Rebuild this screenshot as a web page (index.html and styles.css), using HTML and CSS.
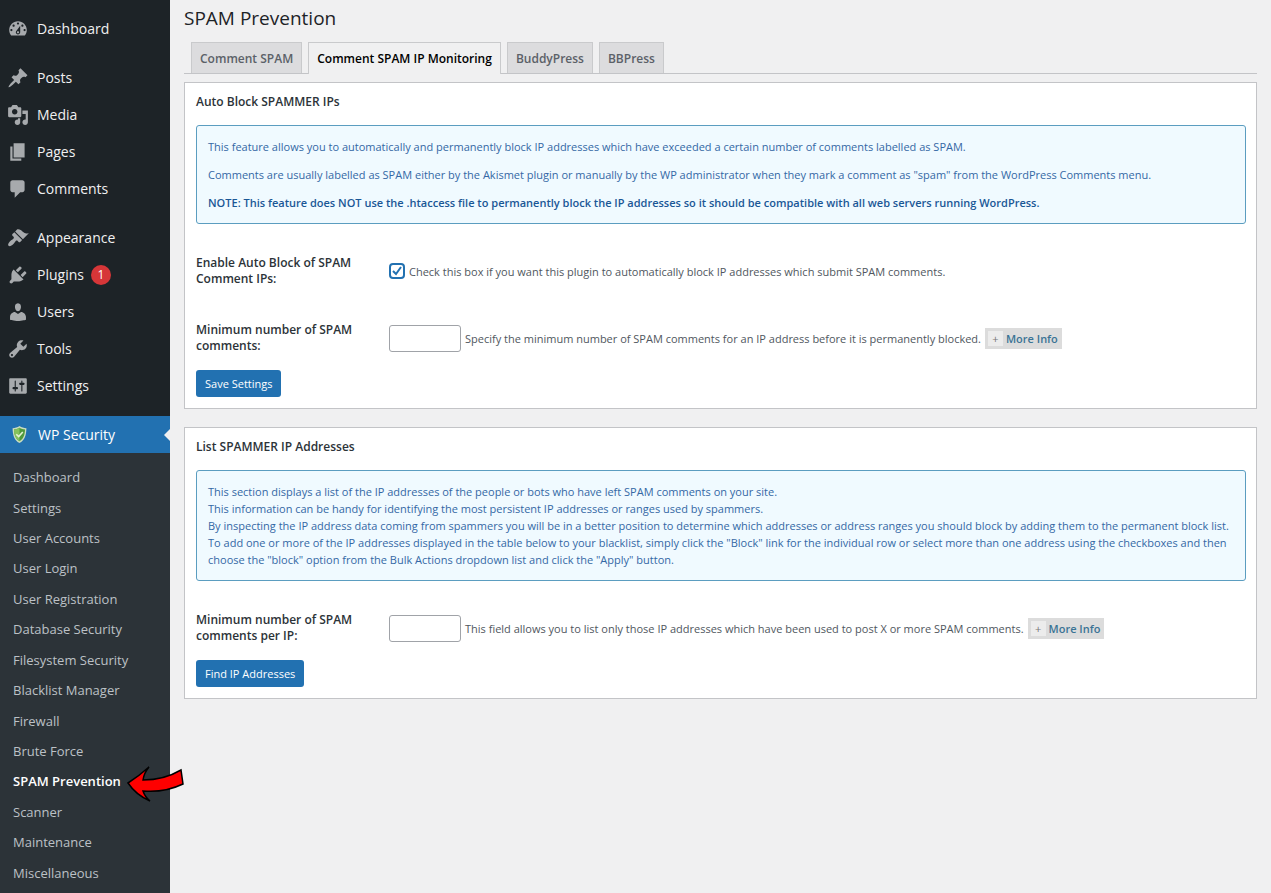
FILE: index.html
```
<!DOCTYPE html>
<html lang="en">

<head>
    <meta charset="UTF-8" />
    <meta name="viewport" content="width=device-width, initial-scale=1.0" />
    <title>SPAM Prevention</title>
    <link rel="stylesheet" href="styles.css">
</head>

<body>
    <nav class="sidebar">
        <ul class="menu">
            <li><a href="#">
                <svg class="icon" viewBox="0 0 20 20"><path fill-rule="evenodd" d="M3.76 16h12.48c1.1-1.37 1.76-3.11 1.76-5 0-4.42-3.58-8-8-8s-8 3.58-8 8c0 1.89.66 3.63 1.76 5zM10 4c.55 0 1 .45 1 1s-.45 1-1 1-1-.45-1-1 .45-1 1-1zM6 6c.55 0 1 .45 1 1s-.45 1-1 1-1-.45-1-1 .45-1 1-1zm8 0c.55 0 1 .45 1 1s-.45 1-1 1-1-.45-1-1 .45-1 1-1zm-5.37 5.55L12 7v6c0 1.1-.9 2-2 2s-2-.9-2-2c0-.57.24-1.08.63-1.45zM4 10c.55 0 1 .45 1 1s-.45 1-1 1-1-.45-1-1 .45-1 1-1zm12 0c.55 0 1 .45 1 1s-.45 1-1 1-1-.45-1-1 .45-1 1-1zm-5 3c0-.55-.45-1-1-1s-1 .45-1 1 .45 1 1 1 1-.45 1-1z"/></svg>
                <span>Dashboard</span></a></li>
            <li class="group"><a href="#">
                <svg class="icon" viewBox="0 0 20 20"><path d="M10.44 3.02l1.82-1.82 6.36 6.35-1.83 1.82c-1.05-.68-2.48-.57-3.41.36l-.75.75c-.92.93-1.04 2.35-.35 3.41l-1.83 1.82-2.41-2.41-2.8 2.79c-.42.42-3.38 2.71-3.8 2.29s1.86-3.39 2.28-3.81l2.79-2.79L4.1 9.36l1.83-1.82c1.05.69 2.48.57 3.4-.36l.75-.75c.93-.92 1.05-2.35.36-3.41z"/></svg>
                <span>Posts</span></a></li>
            <li><a href="#">
                <svg class="icon" viewBox="0 0 20 20"><path fill-rule="evenodd" d="M13 11V4c0-.55-.45-1-1-1h-1.67L9 1H5L3.67 3H2c-.55 0-1 .45-1 1v7c0 .55.45 1 1 1h10c.55 0 1-.45 1-1zM7 4.5c1.38 0 2.5 1.12 2.5 2.5S8.38 9.5 7 9.5 4.5 8.38 4.5 7 5.62 4.5 7 4.5zM14 6h5v10.5c0 1.38-1.12 2.5-2.5 2.5S14 17.88 14 16.5s1.12-2.5 2.5-2.5c.17 0 .34.02.5.05V9h-3V6zm-4 8.05V13h2v3.5c0 1.38-1.12 2.5-2.5 2.5S7 17.88 7 16.5 8.12 14 9.5 14c.17 0 .34.02.5.05z"/></svg>
                <span>Media</span></a></li>
            <li><a href="#">
                <svg class="icon" viewBox="0 0 20 20"><path d="M6 15V2h10v13H6zm-1 1h8v2H3V5h2v11z"/></svg>
                <span>Pages</span></a></li>
            <li><a href="#">
                <svg class="icon" viewBox="0 0 20 20"><path d="M5 2h9c1.1 0 2 .9 2 2v7c0 1.1-.9 2-2 2h-2l-5 5v-5H5c-1.1 0-2-.9-2-2V4c0-1.1.9-2 2-2z"/></svg>
                <span>Comments</span></a></li>
            <li class="group"><a href="#">
                <svg class="icon" viewBox="0 0 20 20"><path d="M14.48 11.06L7.41 3.99l1.5-1.5c.5-.56 2.3-.47 3.51.32 1.21.8 1.43 1.28 2.91 2.1 1.18.64 2.45 1.26 4.45.85zm-.71.71L6.7 4.7 4.93 6.47c-.39.39-.39 1.02 0 1.41l1.06 1.06c.39.39.39 1.03 0 1.42-.6.6-1.43 1.11-2.21 1.69-.35.26-.7.53-1.01.84C1.43 14.23.4 16.08 1.4 17.07c.99 1 2.84-.03 4.18-1.36.31-.31.58-.66.85-1.02.57-.78 1.08-1.61 1.69-2.21.39-.39 1.02-.39 1.41 0l1.06 1.06c.39.39 1.02.39 1.41 0z"/></svg>
                <span>Appearance</span></a></li>
            <li><a href="#">
                <svg class="icon" viewBox="0 0 20 20"><path d="M13.11 4.36L9.87 7.6 8 5.73l3.24-3.24c.35-.34 1.05-.2 1.56.32.52.51.66 1.21.31 1.55zm-8 1.77l.91-1.12 9.01 9.01-1.19.84c-.71.71-2.63 1.16-3.82 1.16H6.14L4.9 17.26c-.59.59-1.54.59-2.12 0-.59-.58-.59-1.53 0-2.12l1.24-1.24v-3.88c0-1.13.4-3.19 1.09-3.89zm7.26 3.97l3.24-3.24c.34-.35 1.04-.21 1.55.31.52.51.66 1.21.31 1.55l-3.24 3.25z"/></svg>
                <span>Plugins</span><span class="count">1</span></a></li>
            <li><a href="#">
                <svg class="icon" viewBox="0 0 20 20"><path d="M10 9.25c-2.27 0-2.73-3.44-2.73-3.44C7 4.02 7.82 2 9.97 2c2.16 0 2.98 2.02 2.71 3.81 0 0-.41 3.44-2.68 3.44zm0 2.57L12.72 10c2.39 0 4.52 2.33 4.52 4.53v2.49s-3.65 1.13-7.24 1.13c-3.65 0-7.24-1.13-7.24-1.13v-2.49c0-2.25 1.94-4.48 4.47-4.48z"/></svg>
                <span>Users</span></a></li>
            <li><a href="#">
                <svg class="icon" viewBox="0 0 20 20"><path fill-rule="evenodd" d="M16.68 9.77c-1.34 1.34-3.3 1.67-4.95.99l-5.41 6.52c-.99.99-2.59.99-3.58 0s-.99-2.59 0-3.57l6.52-5.42c-.68-1.65-.35-3.61.99-4.95 1.28-1.28 3.12-1.62 4.72-1.06l-2.89 2.89 2.82 2.82 2.86-2.87c.53 1.58.18 3.39-1.08 4.65zM3.81 16.21c.4.39 1.04.39 1.43 0 .4-.4.4-1.04 0-1.43-.39-.4-1.03-.4-1.43 0-.39.39-.39 1.03 0 1.43z"/></svg>
                <span>Tools</span></a></li>
            <li><a href="#">
                <svg class="icon" viewBox="0 0 20 20"><path fill-rule="evenodd" d="M18 16V4c0-.55-.45-1-1-1H3c-.55 0-1 .45-1 1v12c0 .55.45 1 1 1h14c.55 0 1-.45 1-1zM8 11h1c.55 0 1 .45 1 1s-.45 1-1 1H8v1.5c0 .28-.22.5-.5.5s-.5-.22-.5-.5V13H6c-.55 0-1-.45-1-1s.45-1 1-1h1V5.5c0-.28.22-.5.5-.5s.5.22.5.5V11zm5-2h-1c-.55 0-1-.45-1-1s.45-1 1-1h1V5.5c0-.28.22-.5.5-.5s.5.22.5.5V7h1c.55 0 1 .45 1 1s-.45 1-1 1h-1v5.5c0 .28-.22.5-.5.5s-.5-.22-.5-.5V9z"/></svg>
                <span>Settings</span></a></li>
            <li class="group current"><a href="#">
                <svg class="shield" viewBox="0 0 16 16">
                    <path fill="#c9dcc0" d="M8 0c2 1.300 4.200 1.900 6.500 2-.1 6.500-1.500 11.200-6.500 14C3 13.200 1.600 8.500 1.500 2 3.800 1.900 6 1.300 8 0z"/>
                    <path fill="#4f9a3c" d="M8 1.700c1.700 1 3.400 1.500 5.200 1.600-.2 5.200-1.500 8.800-5.200 11.100C4.300 12.100 3 8.500 2.800 3.300 4.600 3.200 6.300 2.700 8 1.700z"/>
                    <path fill="#86c25c" d="M8 1.700v12.700C4.300 12.100 3 8.500 2.800 3.300 4.600 3.200 6.300 2.700 8 1.700z"/>
                    <path fill="none" stroke="#e4f3d3" stroke-width="1.500" d="M5 7.800l2.200 2.200 3.900-4.400"/>
                </svg>
                <span>WP Security</span></a></li>
        </ul>
        <ul class="submenu">
            <li><a href="#">Dashboard</a></li>
            <li><a href="#">Settings</a></li>
            <li><a href="#">User Accounts</a></li>
            <li><a href="#">User Login</a></li>
            <li><a href="#">User Registration</a></li>
            <li><a href="#">Database Security</a></li>
            <li><a href="#">Filesystem Security</a></li>
            <li><a href="#">Blacklist Manager</a></li>
            <li><a href="#">Firewall</a></li>
            <li><a href="#">Brute Force</a></li>
            <li class="selected"><a href="#">SPAM Prevention</a>
                <svg class="arrow" viewBox="0 0 58 38"><path fill="#fe0000" stroke="#000" stroke-width="1.500" d="M2 18Q13 11 23 2Q18 8 17 15Q38 15 55 5L57 19Q38 28 17 26Q19 32 24 36Q10 30 2 18z"/></svg>
            </li>
            <li><a href="#">Scanner</a></li>
            <li><a href="#">Maintenance</a></li>
            <li><a href="#">Miscellaneous</a></li>
        </ul>
    </nav>

    <main class="content">
        <h1>SPAM Prevention</h1>
        <div class="tabs">
            <a class="tab" href="#">Comment SPAM</a>
            <a class="tab active" href="#">Comment SPAM IP Monitoring</a>
            <a class="tab" href="#">BuddyPress</a>
            <a class="tab" href="#">BBPress</a>
        </div>

        <form class="panel">
            <h3>Auto Block SPAMMER IPs</h3>
            <div class="notice spaced">
                <p>This feature allows you to automatically and permanently block IP addresses which have exceeded a certain number of comments labelled as SPAM.</p>
                <p>Comments are usually labelled as SPAM either by the Akismet plugin or manually by the WP administrator when they mark a comment as "spam" from the WordPress Comments menu.</p>
                <p><strong>NOTE: This feature does NOT use the .htaccess file to permanently block the IP addresses so it should be compatible with all web servers running WordPress.</strong></p>
            </div>
            <div class="row">
                <label class="name" for="enable-block">Enable Auto Block of SPAM Comment IPs:</label>
                <div class="field">
                    <input type="checkbox" id="enable-block" class="check" checked>
                    <label for="enable-block">Check this box if you want this plugin to automatically block IP addresses which submit SPAM comments.</label>
                </div>
            </div>
            <div class="row">
                <label class="name" for="min-comments">Minimum number of SPAM comments:</label>
                <div class="field">
                    <input type="text" id="min-comments" class="number">
                    <span>Specify the minimum number of SPAM comments for an IP address before it is permanently blocked.</span>
                    <button type="button" class="more"><span class="plus">+</span>More Info</button>
                </div>
            </div>
            <button type="button" class="primary">Save Settings</button>
        </form>

        <form class="panel">
            <h3>List SPAMMER IP Addresses</h3>
            <div class="notice">
                <p>This section displays a list of the IP addresses of the people or bots who have left SPAM comments on your site.</p>
                <p>This information can be handy for identifying the most persistent IP addresses or ranges used by spammers.</p>
                <p>By inspecting the IP address data coming from spammers you will be in a better position to determine which addresses or address ranges you should block by adding them to the permanent block list.</p>
                <p>To add one or more of the IP addresses displayed in the table below to your blacklist, simply click the "Block" link for the individual row or select more than one address using the checkboxes and then choose the "block" option from the Bulk Actions dropdown list and click the "Apply" button.</p>
            </div>
            <div class="row">
                <label class="name" for="min-per-ip">Minimum number of SPAM comments per IP:</label>
                <div class="field">
                    <input type="text" id="min-per-ip" class="number">
                    <span>This field allows you to list only those IP addresses which have been used to post X or more SPAM comments.</span>
                    <button type="button" class="more"><span class="plus">+</span>More Info</button>
                </div>
            </div>
            <button type="button" class="primary">Find IP Addresses</button>
        </form>
    </main>
</body>

</html>
```
FILE: styles.css
```
* {
    box-sizing: border-box;
}

body {
    display: flex;
    min-height: 100vh;
    margin: 0;
    font-family: "Open Sans", "Noto Sans", sans-serif;
    font-size: 11px;
    color: #50575e;
    background-color: #f0f0f1;
}

h1,
h3,
p,
ul {
    margin: 0;
    padding: 0;
    font-weight: 400;
}

ul {
    list-style: none;
}

a {
    color: inherit;
    text-decoration: none;
}

/* Sidebar */
.sidebar {
    display: flex;
    flex-direction: column;
    flex: 0 0 170px;
    background-color: #1d2327;
}

.menu {
    padding-top: 10px;
    font-size: 14px;
    color: #f0f0f1;
}

.menu a {
    display: flex;
    align-items: center;
    height: 37px;
    padding-left: 7px;
}

.group {
    margin-top: 12px;
}

.icon {
    width: 22px;
    height: 22px;
    margin-right: 8px;
    fill: #a7aaad;
}

.shield {
    width: 17px;
    height: 17px;
    margin: 0 10px 0 4px;
}

.count {
    width: 20px;
    height: 20px;
    margin-left: 7px;
    border-radius: 50%;
    font-size: 12px;
    line-height: 20px;
    text-align: center;
    color: #fff;
    background-color: #d63638;
}

.current {
    position: relative;
    color: #fff;
    background-color: #2271b1;
}

.current::after {
    content: "";
    position: absolute;
    top: 13px;
    right: 0;
    border: 6px solid transparent;
    border-left-width: 0;
    border-right-color: #f0f0f1;
}

.submenu {
    display: grid;
    grid-auto-rows: 1fr;
    align-items: center;
    flex: 1;
    padding: 9px 0 5px 13px;
    font-size: 13px;
    color: #bcc1c6;
    background-color: #2c3338;
}

.selected {
    position: relative;
    font-weight: 600;
    color: #fff;
}

.arrow {
    position: absolute;
    top: -7px;
    left: 113px;
    width: 58px;
    height: 38px;
}

/* Content */
.content {
    flex: 1;
    padding: 5px 14px 20px;
}

h1 {
    font-size: 19px;
    line-height: 26px;
    color: #1d2327;
}

.tabs {
    display: flex;
    gap: 6px;
    height: 32px;
    margin: 11px 0 8px;
    padding-left: 7px;
    border-bottom: 1px solid #c3c4c7;
}

.tab {
    height: 31px;
    padding: 0 8px;
    border: 1px solid #c9cacc;
    border-bottom: 0;
    font-size: 12px;
    font-weight: 600;
    line-height: 32px;
    color: #5b6168;
    background-color: #dcdcde;
}

.tab.active {
    height: 32px;
    color: #000;
    background-color: #f0f0f1;
}

.panel {
    margin-bottom: 18px;
    padding: 11px 10px 11px 11px;
    border: 1px solid #c3c4c7;
    background-color: #fff;
}

h3 {
    font-size: 12px;
    font-weight: 600;
    line-height: 16px;
    color: #2c3338;
}

.notice {
    margin: 15px 0 31px;
    padding: 12px 11px;
    border: 1px solid #5b9dc0;
    border-radius: 3px;
    line-height: 17px;
    color: #3468a5;
    background-color: #f0faff;
}

.spaced p + p {
    margin-top: 11px;
}

.notice strong {
    font-weight: 600;
    color: #1a5796;
}

.row {
    display: flex;
    min-height: 32px;
    margin-bottom: 16px;
}

.row + .row {
    margin-top: 35px;
}

.name {
    flex: 0 0 193px;
    padding-right: 30px;
    font-size: 12px;
    font-weight: 600;
    line-height: 16px;
    color: #2c3338;
}

.field {
    display: flex;
    align-items: center;
    gap: 4px;
}

.check {
    appearance: none;
    width: 16px;
    height: 16px;
    margin: 0;
    border: 2px solid #2271b1;
    border-radius: 4px;
    background: #fff url("data:image/svg+xml,%3Csvg xmlns='http://www.w3.org/2000/svg' viewBox='0 0 12 12'%3E%3Cpath d='M2 6l3 3 5-7' fill='none' stroke='%232271b1' stroke-width='2'/%3E%3C/svg%3E") center / 12px no-repeat;
}

.number {
    width: 72px;
    height: 27px;
    border: 1px solid #a0a3a8;
    border-radius: 3px;
    background-color: #fff;
}

.more {
    display: flex;
    align-items: center;
    height: 21px;
    padding: 0 4px 0 3px;
    border: 0;
    font-family: inherit;
    font-size: 11px;
    font-weight: 600;
    color: #3a7395;
    background-color: #dcdcdc;
}

.plus {
    width: 15px;
    margin-right: 3px;
    font-weight: 400;
    line-height: 15px;
    color: #777;
    background-color: #ececec;
}

.primary {
    height: 27px;
    padding: 0 9px;
    border: 0;
    border-radius: 3px;
    font-family: inherit;
    font-size: 11px;
    color: #fff;
    background-color: #2271b1;
}
```
